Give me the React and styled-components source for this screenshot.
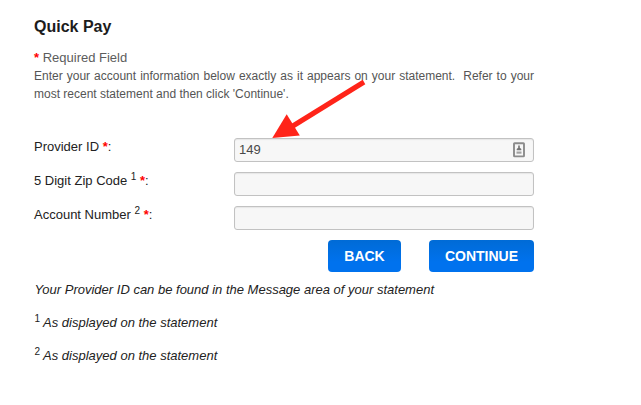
import React from 'react';
import styled, { createGlobalStyle } from 'styled-components';

const GlobalStyle = createGlobalStyle`
  * { box-sizing: border-box; }
  body {
    margin: 0;
    background: #fff;
    color: #222;
    font-family: "Liberation Sans", Arial, sans-serif;
    font-size: 13px;
  }
`;

const Page = styled.main`
  position: relative;
  width: 641px;
  height: 405px;
  padding: 17px 0 0 34px;
  overflow: hidden;
`;

const Content = styled.div`
  width: 500px;
`;

const Title = styled.h1`
  margin: 0 0 11px;
  font-size: 16px;
  line-height: 20px;
  font-weight: 700;
  color: #1c1c1c;
`;

const RequiredNote = styled.p`
  margin: 0;
  height: 19px;
  line-height: 19px;
  color: #5c5c5c;
`;

const Intro = styled.p`
  margin: 0 0 35px;
  font-size: 12px;
  line-height: 18px;
  color: #555;
  text-align: justify;
`;

const Star = styled.span`
  color: #ff0000;
  font-weight: 700;
`;

const Sup = styled.sup`
  font-size: 10px;
  font-style: normal;
  line-height: 0;
  vertical-align: baseline;
  position: relative;
  top: -5px;
`;

const Form = styled.form`
  display: flex;
  flex-direction: column;
  gap: 10px;
`;

const Row = styled.div`
  display: grid;
  grid-template-columns: 200px 300px;
  height: 24px;
`;

const Label = styled.label`
  line-height: 18px;
`;

const Field = styled.div`
  display: flex;
  align-items: center;
  height: 24px;
  padding: 0 8px 0 4px;
  border: 1px solid #c2c2c2;
  border-radius: 3px;
  background: #f7f7f7;
  box-shadow: inset 0 1px 1px #e6e6e6;
`;

const Input = styled.input`
  flex: 1;
  min-width: 0;
  padding: 0;
  border: 0;
  outline: 0;
  background: transparent;
  color: #484848;
  font: 13px/20px "Liberation Sans", Arial, sans-serif;
`;

const Actions = styled.div`
  display: flex;
  justify-content: flex-end;
  gap: 28px;
  margin: 10px 0 9px;
`;

const Button = styled.button`
  width: ${({ $width }) => $width}px;
  height: 32px;
  padding: 0;
  border: 0;
  border-radius: 4px;
  background: linear-gradient(#006bd6, #0072ee 70%);
  color: #fff;
  font: 700 14px/32px "Liberation Sans", Arial, sans-serif;
`;

const Footnote = styled.p`
  margin: 0 0 15px;
  padding-left: 0.4px;
  height: 18px;
  line-height: 18px;
  font-style: italic;
`;

const ArrowOverlay = styled.svg`
  position: absolute;
  left: 268px;
  top: 76px;
  pointer-events: none;
`;

const ContactIcon = () => (
  <svg width="12" height="16" viewBox="0 0 12 16" aria-hidden="true">
    <rect x="1" y="1.2" width="10" height="13.2" rx="0.6" fill="#f7f7f7" stroke="#8c8c8c" strokeWidth="1.9" />
    <path d="M5.2 3.6h1.6v2.1l1.5 1.3v1.2H3.7V7l1.5-1.3z" fill="#747474" />
    <path d="M3.5 9.5h5v2.2h-5z" fill="#a2a2a2" />
  </svg>
);

const FIELDS = [
  { id: 'provider', label: 'Provider ID', value: '149', icon: true },
  { id: 'zip', label: '5 Digit Zip Code', note: '1', value: '' },
  { id: 'account', label: 'Account Number', note: '2', value: '' },
];

export default function App() {
  return (
    <Page>
      <GlobalStyle />
      <Content>
        <Title>Quick Pay</Title>
        <RequiredNote><Star>*</Star> Required Field</RequiredNote>
        <Intro>
          Enter your account information below exactly as it appears on your statement.&nbsp; Refer to your most recent statement and then click 'Continue'.
        </Intro>
        <Form onSubmit={(e) => e.preventDefault()}>
          {FIELDS.map((f) => (
            <Row key={f.id}>
              <Label htmlFor={f.id}>
                {f.label} {f.note && <><Sup>{f.note}</Sup>{' '}</>}<Star>*</Star>:
              </Label>
              <Field>
                <Input id={f.id} defaultValue={f.value} />
                {f.icon && <ContactIcon />}
              </Field>
            </Row>
          ))}
        </Form>
        <Actions>
          <Button type="button" $width={73}>BACK</Button>
          <Button type="button" $width={105}>CONTINUE</Button>
        </Actions>
        <Footnote>Your Provider ID can be found in the Message area of your statement</Footnote>
        <Footnote><Sup>1</Sup> As displayed on the statement</Footnote>
        <Footnote><Sup>2</Sup> As displayed on the statement</Footnote>
      </Content>
      <ArrowOverlay width="100" height="66" viewBox="268 76 100 66" aria-hidden="true">
        <path d="M364 82L288 129" stroke="#ff2419" strokeWidth="5" />
        <path d="M272.3 138L286.7 114.3L299.8 135.6z" fill="#ff2419" />
      </ArrowOverlay>
    </Page>
  );
}
